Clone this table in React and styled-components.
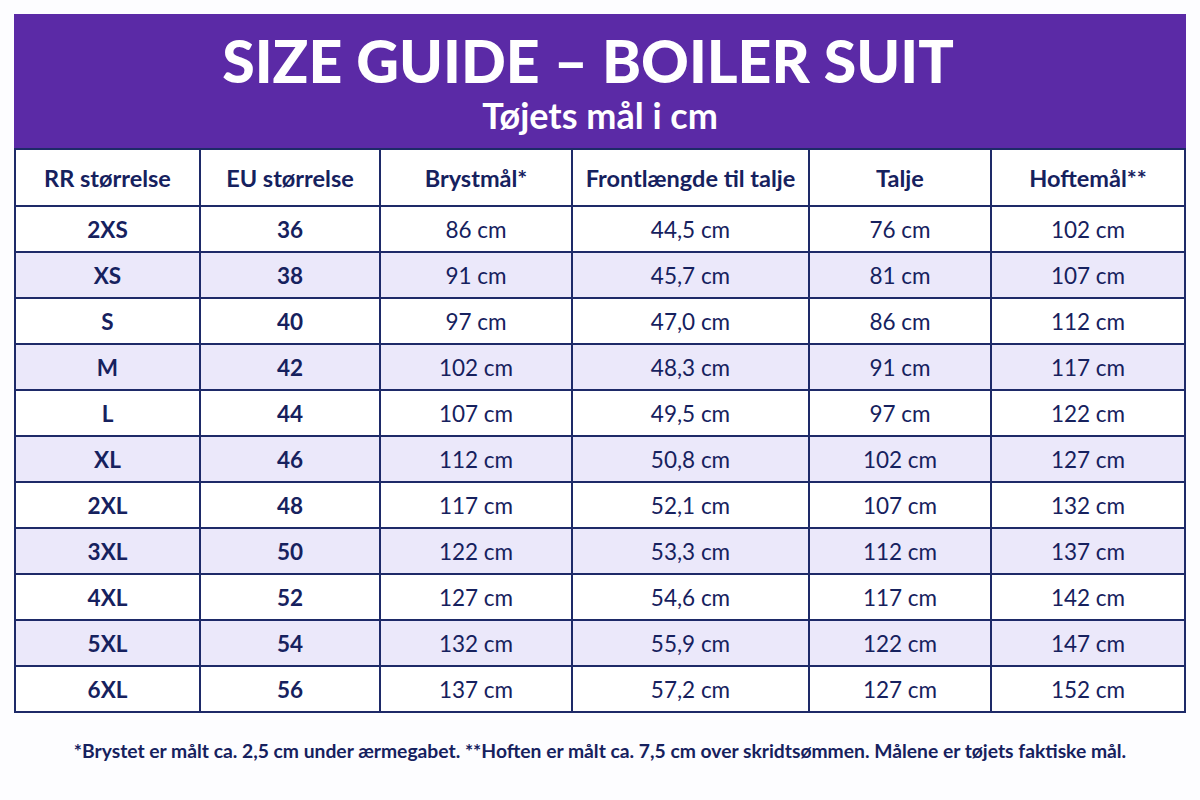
import styled, { createGlobalStyle } from "styled-components";

const GlobalStyle = createGlobalStyle`
  body {
    margin: 0;
    background: #fdfdff;
    font-family: Lato, "Open Sans", sans-serif;
  }
`

const rows = [
  ["2XS", "36", "86 cm", "44,5 cm", "76 cm", "102 cm"],
  ["XS", "38", "91 cm", "45,7 cm", "81 cm", "107 cm"],
  ["S", "40", "97 cm", "47,0 cm", "86 cm", "112 cm"],
  ["M", "42", "102 cm", "48,3 cm", "91 cm", "117 cm"],
  ["L", "44", "107 cm", "49,5 cm", "97 cm", "122 cm"],
  ["XL", "46", "112 cm", "50,8 cm", "102 cm", "127 cm"],
  ["2XL", "48", "117 cm", "52,1 cm", "107 cm", "132 cm"],
  ["3XL", "50", "122 cm", "53,3 cm", "112 cm", "137 cm"],
  ["4XL", "52", "127 cm", "54,6 cm", "117 cm", "142 cm"],
  ["5XL", "54", "132 cm", "55,9 cm", "122 cm", "147 cm"],
  ["6XL", "56", "137 cm", "57,2 cm", "127 cm", "152 cm"],
]

const headings = ["RR størrelse", "EU størrelse", "Brystmål*", "Frontlængde til talje", "Talje", "Hoftemål**"]
const widths = [185, 180, 192, 237, 182, 194]

const SizeGuide = () => {
  return (
    <Page>
      <GlobalStyle />
      <Banner>
        <Title>SIZE GUIDE – BOILER SUIT</Title>
        <Subtitle>Tøjets mål i cm</Subtitle>
      </Banner>
      <Table>
        <colgroup>
          {widths.map((w, i) => <col key={i} style={{width: w}} />)}
        </colgroup>
        <thead>
          <tr>
            {headings.map(h => <HeadCell key={h}>{h}</HeadCell>)}
          </tr>
        </thead>
        <tbody>
          {rows.map((r, i) => (
            <Row key={r[0]} $shaded={i % 2 === 1}>
              {r.map((v, j) => <Cell key={j} $bold={j < 2}>{v}</Cell>)}
            </Row>
          ))}
        </tbody>
      </Table>
      <Note>
        *Brystet er målt ca. 2,5 cm under ærmegabet. **Hoften er målt ca. 7,5 cm over skridtsømmen. Målene er tøjets faktiske mål.
      </Note>
    </Page>
  );
}

const Page = styled.div`
  width: 1172px;
  padding: 14px 14px 0;
`

const Banner = styled.header`
  height: 134px;
  background: #5b2aa6;
  display: flex;
  flex-direction: column;
  align-items: center;
  box-sizing: border-box;
  padding-top: 17px;
  color: #fff;
`

const Title = styled.h1`
  margin: 0;
  font-size: 59px;
  line-height: 60px;
  font-weight: 900;
  letter-spacing: 0;
  transform: translateX(-12px);
`

const Subtitle = styled.h2`
  margin: 4px 0 0;
  font-size: 36px;
  line-height: 40px;
  font-weight: 700;
`

const Table = styled.table`
  width: 1172px;
  border-collapse: collapse;
  table-layout: fixed;
  color: #16215e;
  border: 2px solid #1e2a68;
`

const HeadCell = styled.th`
  height: 55px;
  border: 2px solid #1e2a68;
  font-size: 23.5px;
  font-weight: 700;
  text-align: center;
  padding: 0;
  background: #fff;
`

const Row = styled.tr`
  background: ${p => p.$shaded ? "#ebe8fa" : "#fff"};
`

const Cell = styled.td`
  height: 44px;
  border: 2px solid #1e2a68;
  text-align: center;
  padding: 0;
  font-size: 22.5px;
  font-weight: ${p => p.$bold ? 700 : 400};
`

const Note = styled.p`
  margin: 26px 0 0;
  text-align: center;
  font-size: 19.3px;
  font-weight: 700;
  color: #16215e;
`

export default SizeGuide;
